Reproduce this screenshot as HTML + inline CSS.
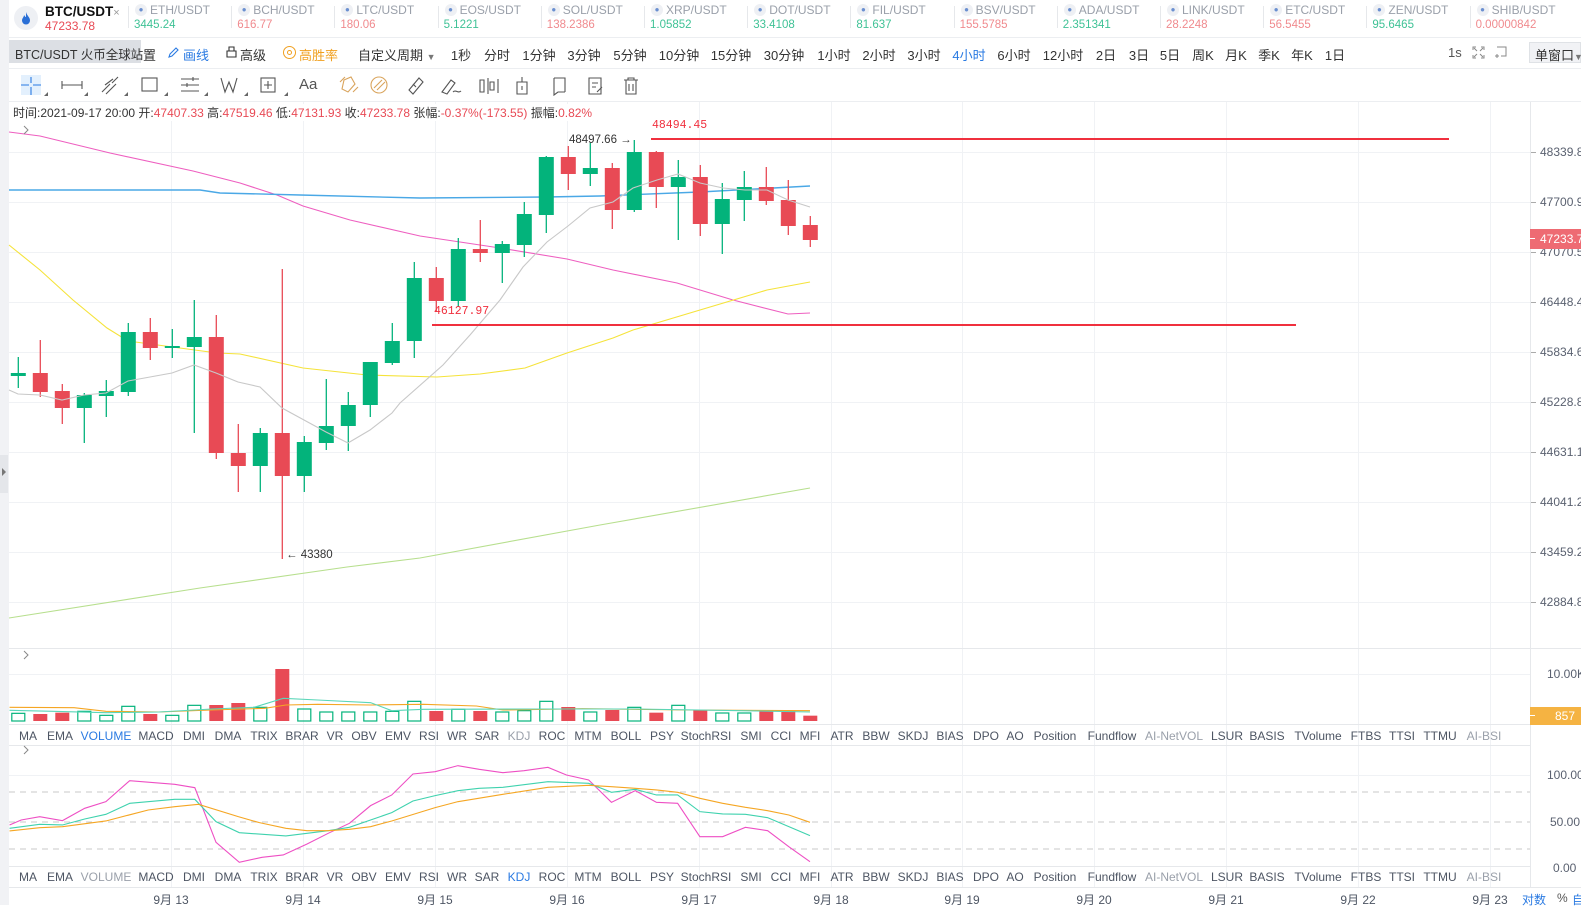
<!DOCTYPE html>
<html><head><meta charset="utf-8">
<style>
*{margin:0;padding:0;box-sizing:border-box}
body{width:1581px;height:905px;overflow:hidden;background:#fff;font-family:"Liberation Sans","Noto Sans CJK SC",sans-serif;color:#333;position:relative}
.a{position:absolute;white-space:nowrap}
.c{transform:translateX(-50%)}
.tb{font-size:13px;color:#333;top:45px}
.tab{font-size:12px;color:#4d5563;transform:translateX(-50%)}
.ax{font-size:12px;color:#5a6170}
</style></head><body>
<div class="a" style="left:0;top:0;width:9px;height:905px;background:#f1f2f5"></div>
<div class="a" style="left:0;top:455px;width:8px;height:38px;background:#e4e6ea"></div>
<div class="a" style="left:2px;top:468px;width:0;height:0;border-left:4px solid #777;border-top:4px solid transparent;border-bottom:4px solid transparent"></div>

<div class="a" style="left:14px;top:6px;width:24px;height:24px;border-radius:50%;background:#eef0f4"></div>
<svg class="a" style="left:20px;top:11px" width="12" height="14" viewBox="0 0 12 14"><path d="M6 1C7 5 10 6 10 9.5A4 4 0 0 1 2 9.5C2 7 4 6 4 4C5 5 5 6 6 6C6 4 6 3 6 1Z" fill="#2a6fd6"/></svg>
<div class="a" style="left:45px;top:4px;font-size:13.5px;font-weight:bold;color:#111">BTC/USDT<span style="font-weight:normal;color:#999;font-size:11px">×</span></div>
<div class="a" style="left:45px;top:19px;font-size:12px;color:#e84a55">47233.78</div>
<div id="tk"></div>
<div class="a" style="left:9px;top:37px;width:1572px;height:1px;background:#eceef1"></div>

<div class="a" style="left:9px;top:40px;width:132px;height:23px;background:#dcdfe4"></div>
<div class="a" style="left:15px;top:44px;font-size:12.5px;color:#333">BTC/USDT 火币全球站</div>
<div class="a tb" style="left:143px">置</div>
<svg class="a" style="left:168px;top:46px" width="12" height="12" viewBox="0 0 12 12"><path d="M1 11L2 8L8 2L10 4L4 10Z" fill="none" stroke="#2a7ae2" stroke-width="1.1"/></svg>
<div class="a tb" style="left:183px;color:#2a7ae2">画线</div>
<svg class="a" style="left:226px;top:46px" width="11" height="12" viewBox="0 0 11 12"><path d="M1 5H10V11H1ZM3 5V1H8V5" fill="none" stroke="#333" stroke-width="1.1"/></svg>
<div class="a tb" style="left:240px">高级</div>
<div class="a" style="left:283px;top:46px;width:13px;height:13px;border:1.3px solid #f0a020;border-radius:50%"></div>
<div class="a" style="left:287px;top:50px;width:5px;height:5px;border:1px solid #f0a020;border-radius:50%"></div>
<div class="a tb" style="left:299px;color:#f0a020">高胜率</div>
<div class="a tb" style="left:358px">自定义周期 <span style="font-size:9px;color:#777">▼</span></div>
<div id="per"></div>
<div class="a" style="left:1448px;top:45px;font-size:13px;color:#555">1s</div>
<svg class="a" style="left:1472px;top:46px" width="13" height="13" viewBox="0 0 13 13" fill="none" stroke="#888" stroke-width="1"><path d="M1 4V1H4M9 1H12V4M12 9V12H9M4 12H1V9M2 2L5 5M11 2L8 5M11 11L8 8M2 11L5 8"/></svg>
<svg class="a" style="left:1494px;top:46px" width="13" height="13" viewBox="0 0 13 13" fill="none" stroke="#888" stroke-width="1"><path d="M3 1H12V10H7M1 10H5M3 8V12"/></svg>
<div class="a" style="left:1529px;top:42px;width:52px;height:21px;background:#f1f2f5;border:1px solid #dfe2e6"></div>
<div class="a" style="left:1535px;top:45px;font-size:13px;color:#333">单窗口<span style="font-size:9px;color:#777">▼</span></div>
<div class="a" style="left:9px;top:68px;width:1572px;height:1px;background:#eceef1"></div>

<div class="a" style="left:21px;top:75px;width:20px;height:20px;background:#e3f0fd"></div>
<svg class="a" style="left:9px;top:70px" width="660" height="32" fill="none" stroke="#555" stroke-width="1.1">
<path d="M12 15H20M24 15H32M22 7V13M22 17V25" stroke="#2a7ae2"/>
<path d="M53 15H73M53 11V19M73 11V19"/>
<path d="M93 22L101 14M97 24L107 14M103 13L109 7M96 15L104 9"/>
<rect x="133" y="8" width="15" height="13"/>
<path d="M172 9H190M172 15H190M172 21H190M178 13V17M184 7V11"/>
<path d="M212 8L216 22L220 12L224 22L228 8"/>
<rect x="252" y="8" width="14" height="14"/><path d="M259 11V19M255 15H263"/>
<path d="M335 10L342 7L346 14L339 22L333 19ZM331 12L336 7M344 22L349 17" stroke="#d9a45c"/>
<circle cx="370" cy="15" r="8" stroke="#d9a45c"/><path d="M365 18L373 10M368 20L376 12" stroke="#d9a45c"/>
<path d="M400 20L410 8L414 12L404 24ZM404 14L407 17"/>
<path d="M433 22L442 10L446 13L438 24ZM444 22C447 19 449 24 452 21"/>
<path d="M471 10V22H475V10ZM479 8V24M481 12V20H485V12ZM489 9V23"/>
<path d="M508 12H518V24H508ZM513 7V12M513 16V20"/>
<path d="M545 8H556V22M545 8V25L549 22H556"/>
<path d="M580 8H592V24H580ZM583 13H589M583 17H587M588 22L593 17"/>
<path d="M615 10H629M619 10V8H625V10M617 10V24H627V10M620 14V21M624 14V21"/>
</svg>
<svg class="a" style="left:9px;top:70px" width="300" height="32" fill="#666"><path d="M35 26L39 26L39 22Z M75 26L79 26L79 22Z M115 26L119 26L119 22Z M155 26L159 26L159 22Z M195 26L199 26L199 22Z M235 26L239 26L239 22Z M275 26L279 26L279 22Z"/></svg>
<div class="a" style="left:299px;top:76px;font-size:15px;color:#555">Aa</div>
<div class="a" style="left:9px;top:101px;width:1572px;height:1px;background:#eceef1"></div>

<svg class="a" style="left:0;top:0" width="1581" height="905">
<g id="grid" stroke="#f0f2f5" stroke-width="1"></g>
<line x1="1530.5" y1="102" x2="1530.5" y2="887" stroke="#e6e8eb"/>
<line x1="9" y1="648.5" x2="1581" y2="648.5" stroke="#e6e8eb"/>
<line x1="9" y1="724.5" x2="1530" y2="724.5" stroke="#e6e8eb"/>
<line x1="9" y1="745.5" x2="1530" y2="745.5" stroke="#e6e8eb"/>
<line x1="9" y1="866.5" x2="1530" y2="866.5" stroke="#e6e8eb"/>
<line x1="9" y1="887.5" x2="1581" y2="887.5" stroke="#e6e8eb"/>
<g fill="none" stroke-width="1.1">
<polyline stroke="#ee5fc0" points="9,132 40,136 110,153 193,171 240,183 277,195 303,206 350,220 420,236 500,248 567,259 613,270 677,283 733,300 788,314 810,313"/>
<polyline stroke="#4aa8e6" stroke-width="1.4" points="9,190 30,190 200,190 220,193 300,195 420,198 546,197 600,196 700,192 810,186"/>
<polyline stroke="#f5e33a" points="9,245 40,270 73,300 107,328 128,341 217,353 240,354 303,368 367,375 437,377 480,374 525,368 567,353 613,338 633,330 700,310 767,290 810,282"/>
<polyline stroke="#b7df8e" points="9,618 200,588 347,567 420,558 600,525 810,488"/>
</g>
<g id="cd"></g>
<polyline fill="none" stroke="#c8c8c8" stroke-width="1.1" points="9,390 18,394 40,395 62,400 84,395 106,393 128,381 150,377 172,373 194,365 216,373 238,382 260,387 282,408 304,420 326,432 348,443 370,430 392,413 400,403 443,365 470,335 500,300 523,267 547,242 568,226 590,208 613,202 633,188 657,180 678,174 700,183 723,188 745,190 767,190 788,200 810,207"/>
<line x1="651" y1="139" x2="1449" y2="139" stroke="#f0303e" stroke-width="2"/>
<line x1="432" y1="325" x2="1296" y2="325" stroke="#f0303e" stroke-width="2"/>
<text x="652" y="128" font-family="Liberation Mono" font-size="11.5" fill="#f0303e">48494.45</text>
<text x="434" y="314" font-family="Liberation Mono" font-size="11.5" fill="#f0303e">46127.97</text>
<text x="569" y="143" font-family="Liberation Sans" font-size="11.5" fill="#333">48497.66 →</text>
<text x="286" y="558" font-family="Liberation Sans" font-size="11.5" fill="#333">← 43380</text>
<path d="M24 126L28 130L24 134M24 651L28 655L24 659M24 746L28 750L24 754" fill="none" stroke="#888"/>
<g id="vol"></g>
<g transform="translate(0,640) scale(0.5294,0.3333)" fill="none" stroke-width="1.1">
<polyline vector-effect="non-scaling-stroke" stroke="#f5a623" points="18,202 140,203 200,214 300,216 400,210 500,205 540,195 600,193 700,195 800,193 900,198 950,210 1100,206 1300,210 1530,212"/>
<polyline vector-effect="non-scaling-stroke" stroke="#5ad6b8" points="18,211 100,214 200,218 300,216 400,207 480,202 535,175 600,180 700,188 740,212 800,208 1000,207 1200,207 1400,212 1530,216"/>
</g>
<g stroke="#c8c8c8" stroke-dasharray="6,5"><line x1="9" y1="792" x2="1530" y2="792"/><line x1="9" y1="822" x2="1530" y2="822"/><line x1="9" y1="849" x2="1530" y2="849"/></g>
<g transform="translate(0,640) scale(0.5294,0.3333)" fill="none" stroke-width="1.1">
<polyline vector-effect="non-scaling-stroke" stroke="#ee4fc4" points="18,555 40,540 75,530 118,542 160,505 200,485 245,422 330,433 368,443 408,607 452,667 495,652 535,645 580,612 620,580 660,550 700,497 740,465 780,402 822,395 865,377 905,388 950,398 990,392 1035,382 1070,405 1112,420 1155,487 1200,452 1240,487 1280,490 1322,590 1365,590 1408,562 1450,572 1490,620 1530,665"/>
<polyline vector-effect="non-scaling-stroke" stroke="#3fd2ae" points="18,565 75,553 118,555 160,537 200,523 245,490 330,478 368,478 408,545 452,578 540,588 620,572 660,562 700,540 740,518 780,483 822,467 865,452 905,445 950,442 1035,425 1112,430 1155,457 1200,448 1240,465 1280,465 1322,515 1365,522 1408,523 1450,533 1490,560 1530,587"/>
<polyline vector-effect="non-scaling-stroke" stroke="#f5a623" points="18,573 75,563 118,560 200,543 280,510 330,500 375,493 450,530 490,548 540,565 580,572 620,572 660,568 700,560 740,543 822,503 865,485 950,463 1035,442 1112,436 1155,440 1200,445 1240,450 1280,457 1322,475 1365,490 1408,502 1450,512 1490,525 1530,547"/>
</g>
</svg>

<div class="a" style="left:13px;top:104px;font-size:12px;color:#333;background:#fff;z-index:2">时间:2021-09-17 20:00 开:<span style="color:#e84a55">47407.33</span> 高:<span style="color:#e84a55">47519.46</span> 低:<span style="color:#e84a55">47131.93</span> 收:<span style="color:#e84a55">47233.78</span> 张幅:<span style="color:#e84a55">-0.37%(-173.55)</span> 振幅:<span style="color:#e84a55">0.82%</span></div>

<div id="ax"></div>
<div class="a" style="left:1530px;top:229px;width:51px;height:20px;background:#ee6b73"></div>
<div class="a" style="left:1530px;top:238px;width:5px;height:1px;background:#fff"></div>
<div class="a" style="left:1540px;top:232px;font-size:12px;color:#fff">47233.7</div>
<div class="a ax" style="left:1547px;top:667px">10.00K</div>
<div class="a" style="left:1530px;top:707px;width:51px;height:18px;background:#f5b342"></div>
<div class="a" style="left:1530px;top:715px;width:5px;height:1px;background:#fff"></div>
<div class="a" style="left:1555px;top:709px;font-size:12px;color:#fff">857</div>
<div class="a ax" style="left:1547px;top:768px">100.00</div>
<div class="a ax" style="left:1550px;top:815px">50.00</div>
<div class="a ax" style="left:1553px;top:861px">0.00</div>
<div id="tabs"></div>
<div id="time"></div>
<div class="a" style="left:1522px;top:891px;font-size:12px;color:#2a7ae2">对数</div>
<div class="a" style="left:1557px;top:891px;font-size:12px;color:#555">%</div>
<div class="a" style="left:1572px;top:891px;font-size:12px;color:#2a7ae2">自</div>

<script>
var h='';
var tk=[["ETH/USDT","3445.24","g"],["BCH/USDT","616.77","r"],["LTC/USDT","180.06","r"],["EOS/USDT","5.1221","g"],["SOL/USDT","138.2386","r"],["XRP/USDT","1.05852","g"],["DOT/USDT","33.4108","g"],["FIL/USDT","81.637","g"],["BSV/USDT","155.5785","r"],["ADA/USDT","2.351341","g"],["LINK/USDT","28.2248","r"],["ETC/USDT","56.5455","r"],["ZEN/USDT","95.6465","g"],["SHIB/USDT","0.00000842","r"]];
tk.forEach(function(t,i){var x=135+i*103.2;
h+='<div class="a" style="left:'+(x-7)+'px;top:6px;width:1px;height:22px;background:#e6e8eb"></div>';
h+='<div class="a" style="left:'+x+'px;top:4px;width:12px;height:12px;border-radius:50%;background:#eef0f4;font-size:8px;color:#6a8fd0;text-align:center;line-height:12px">●</div>';
h+='<div class="a" style="left:'+(x+15)+'px;top:3px;font-size:12px;color:#9aa0aa">'+t[0]+'</div>';
h+='<div class="a" style="left:'+(x-1)+'px;top:19px;font-size:11.5px;color:'+(t[2]=="g"?"#3fc296":"#f08a8e")+'">'+t[1]+'</div>';});
document.getElementById('tk').innerHTML=h;
h='';
var per=[["1秒",461],["分时",497],["1分钟",539],["3分钟",584],["5分钟",630],["10分钟",679],["15分钟",731],["30分钟",784],["1小时",834],["2小时",879],["3小时",924],["4小时",969],["6小时",1014],["12小时",1063],["2日",1106],["3日",1139],["5日",1170],["周K",1203],["月K",1236],["季K",1269],["年K",1302],["1日",1335]];
per.forEach(function(p){h+='<div class="a tb c" style="left:'+p[1]+'px;'+(p[0]=="4小时"?'color:#2a7ae2':'')+'">'+p[0]+'</div>';});
document.getElementById('per').innerHTML=h;
var g='';
for(var y=152;y<=602;y+=50)g+='<line x1="9" y1="'+(y+.5)+'" x2="1530" y2="'+(y+.5)+'"/>';
g+='<line x1="9" y1="674.5" x2="1530" y2="674.5"/><line x1="9" y1="775.5" x2="1530" y2="775.5"/>';
for(var i=0;i<11;i++){var x=Math.round(171+131.9*i)+.5;g+='<line x1="'+x+'" y1="102" x2="'+x+'" y2="887"/>';}
for(var y=152;y<=602;y+=50)g+='<line x1="1530" y1="'+(y+.5)+'" x2="1536" y2="'+(y+.5)+'" stroke="#aaa"/>';
document.getElementById('grid').innerHTML=g;
var C=[["g",357,373,376,388],["r",340,373,392,397],["r",384,391,408,424],["g",393,395,408,443],["g",380,391,396,417],["g",323,332,392,396],["r",318,332,348,360],["g",329,346,348,358],["g",300,337,347,433],["r",315,337,453,459],["r",424,453,466,492],["g",428,433,466,492],["r",269,433,476,559],["g",436,442,476,492],["g",379,426,443,450],["g",392,405,426,451],["g",362,362,405,417],["g",323,341,363,365],["g",262,278,341,358],["r",267,278,301,312],["g",238,249,301,307],["r",220,249,253,262],["g",241,244,253,283],["g",202,214,245,257],["g",156,157,215,233],["r",146,157,174,190],["g",143,168,174,186],["r",163,168,210,229],["g",140,152,210,212],["r",151,152,187,208],["g",160,177,187,240],["r",165,177,224,236],["g",183,199,224,254],["g",171,187,200,221],["r",167,187,201,205],["r",180,200,226,235],["r",216,225,240,247]];
var V=[220,222,218,214,226,199,222,226,196,195,189,202,87,207,216,216,216,214,184,213,208,213,216,212,184,201,216,210,202,218,196,210,219,219,213,213,227];
var s='',v='';
C.forEach(function(c,i){var x=18.3+22*i,col=c[0]=="g"?"#03b37b":"#e84a55";
s+='<line x1="'+x+'" y1="'+c[1]+'" x2="'+x+'" y2="'+c[4]+'" stroke="'+col+'" stroke-width="1.3"/>';
s+='<rect x="'+(x-7.5)+'" y="'+c[2]+'" width="15" height="'+Math.max(2,c[3]-c[2])+'" fill="'+col+'"/>';
var t=640+V[i]/3,b=721;
if(c[0]=="g")v+='<rect x="'+(x-6.5)+'" y="'+t+'" width="13" height="'+(b-t)+'" fill="none" stroke="#03b37b" stroke-width="1.2"/>';
else v+='<rect x="'+(x-7)+'" y="'+t+'" width="14" height="'+(b-t)+'" fill="#e84a55"/>';});
document.getElementById('cd').innerHTML=s;document.getElementById('vol').innerHTML=v;
var L=["48339.8","47700.9","47070.5","46448.4","45834.6","45228.8","44631.1","44041.2","43459.2","42884.8"],a='';
L.forEach(function(l,i){a+='<div class="a ax" style="left:1540px;top:'+(145+50*i)+'px">'+l+'</div>';});
document.getElementById('ax').innerHTML=a;
var T=[["MA",28],["EMA",60],["VOLUME",106],["MACD",156],["DMI",194],["DMA",228],["TRIX",264],["BRAR",302],["VR",335],["OBV",364],["EMV",398],["RSI",429],["WR",457],["SAR",487],["KDJ",519],["ROC",552],["MTM",588],["BOLL",626],["PSY",662],["StochRSI",706],["SMI",751],["CCI",781],["MFI",810],["ATR",842],["BBW",876],["SKDJ",913],["BIAS",950],["DPO",986],["AO",1015],["Position",1055],["Fundflow",1112],["AI-NetVOL",1174],["LSUR",1227],["BASIS",1267],["TVolume",1318],["FTBS",1366],["TTSI",1402],["TTMU",1440],["AI-BSI",1484]];
var tb='';
[729,870].forEach(function(y,r){T.forEach(function(t){var col='#4d5563';
if(t[0]=="AI-NetVOL"||t[0]=="AI-BSI")col='#9aa0aa';
if(r==0&&t[0]=="VOLUME")col='#2a7ae2';if(r==0&&t[0]=="KDJ")col='#9aa0aa';
if(r==1&&t[0]=="KDJ")col='#2a7ae2';if(r==1&&t[0]=="VOLUME")col='#9aa0aa';
tb+='<div class="a tab" style="left:'+t[1]+'px;top:'+y+'px;color:'+col+'">'+t[0]+'</div>';});});
document.getElementById('tabs').innerHTML=tb;
var tm='';for(var i=0;i<11;i++)tm+='<div class="a c" style="left:'+Math.round(171+131.9*i)+'px;top:891px;font-size:12px;color:#4d5563">9月 '+(13+i)+'</div>';
document.getElementById('time').innerHTML=tm;
</script>
</body></html>
